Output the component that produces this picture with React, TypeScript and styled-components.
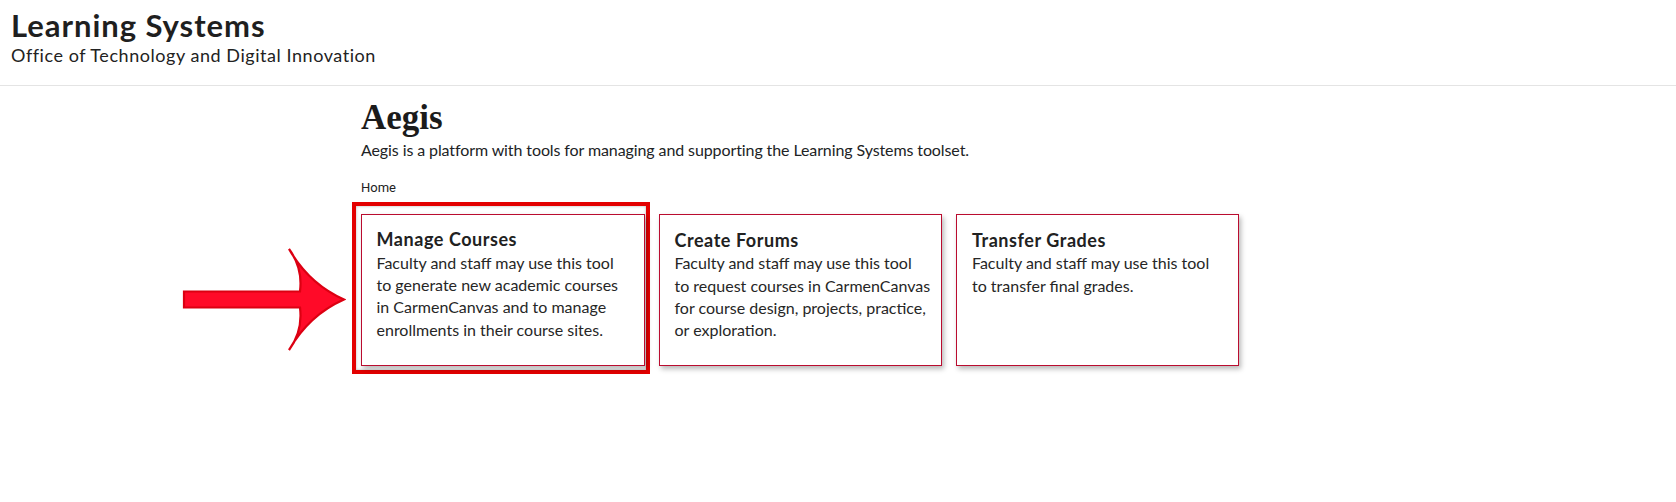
import styled, { createGlobalStyle } from 'styled-components';

type Tool = {
  title: string;
  text: string;
  highlighted?: boolean;
};

const tools: Tool[] = [
  {
    title: 'Manage Courses',
    text: 'Faculty and staff may use this tool to\u00a0generate new academic courses in\u00a0CarmenCanvas and to manage enrollments in their course sites.',
    highlighted: true,
  },
  {
    title: 'Create Forums',
    text: 'Faculty and staff may use this tool to\u00a0request courses in CarmenCanvas for course design, projects, practice, or exploration.',
  },
  {
    title: 'Transfer Grades',
    text: 'Faculty and staff may use this tool to\u00a0transfer final grades.',
  },
];

const GlobalStyle = createGlobalStyle`
  *, *::before, *::after {
    box-sizing: border-box;
  }

  body {
    margin: 0;
    background: #fff;
    color: #212325;
    font-family: Lato, 'Open Sans', sans-serif;
  }

  #root {
    min-height: 100vh;
  }
`;

const Arrow = () => (
  <ArrowSvg width="165" height="108" viewBox="0 0 165 108">
    <path
      d="M3,45.5 H119 Q122,22 108,3 Q128,38 163,53.5 Q128,69 108,104 Q122,85 119,61.5 H3 Z"
      fill="#ff0a28"
      stroke="#dc0012"
      strokeWidth="2.2"
    />
  </ArrowSvg>
);

const ToolCard = ({ title, text }: Tool) => (
  <Card>
    <CardTitle>{title}</CardTitle>
    <CardText>{text}</CardText>
  </Card>
);

const App = () => (
  <>
    <GlobalStyle />
    <Header>
      <SiteTitle>Learning Systems</SiteTitle>
      <SiteSubtitle>Office of Technology and Digital Innovation</SiteSubtitle>
    </Header>
    <Main>
      <PageTitle>Aegis</PageTitle>
      <Lead>
        Aegis is a platform with tools for managing and supporting the Learning Systems toolset.
      </Lead>
      <Breadcrumb>Home</Breadcrumb>
      <CardGrid>
        {tools.map((tool) =>
          tool.highlighted ? (
            <Callout key={tool.title}>
              <Arrow />
              <ToolCard {...tool} />
            </Callout>
          ) : (
            <ToolCard key={tool.title} {...tool} />
          ),
        )}
      </CardGrid>
    </Main>
  </>
);

export default App;

const Header = styled.header`
  padding: 7px 11px 18px;
  border-bottom: 1px solid #e4e4e4;
`;

const SiteTitle = styled.h1`
  margin: 0;
  font-size: 31px;
  line-height: 36px;
  font-weight: 700;
  letter-spacing: 0.95px;
  color: #1f1f1f;
`;

const SiteSubtitle = styled.p`
  margin: 2px 0 0;
  font-size: 18px;
  line-height: 21.6px;
  letter-spacing: 0.55px;
  color: #222;
`;

const Main = styled.main`
  width: 954px;
  margin: 0 auto;
  padding-top: 12px;
`;

const PageTitle = styled.h2`
  margin: 0;
  font-family: 'Liberation Serif', 'DejaVu Serif', serif;
  font-size: 35px;
  line-height: 40px;
  font-weight: 700;
  color: #1b1b1b;
`;

const Lead = styled.p`
  margin: 0;
  font-size: 16px;
  line-height: 24px;
  letter-spacing: -0.1px;
`;

const Breadcrumb = styled.nav`
  margin-top: 16px;
  font-family: Roboto, 'Liberation Sans', sans-serif;
  font-size: 13px;
  line-height: 19.5px;
  color: #222;
`;

const CardGrid = styled.div`
  margin-top: 17px;
  display: grid;
  grid-template-columns: repeat(3, 283px);
  column-gap: 14.5px;
`;

const Callout = styled.div`
  position: relative;
  margin: -12px -6px -8px -9px;
  padding: 7.5px 1.5px 3.5px 4.5px;
  border: 4.5px solid #e30000;
  box-shadow: inset 0 0 3px rgba(0, 0, 0, 0.3);
`;

const ArrowSvg = styled.svg`
  position: absolute;
  left: -175.5px;
  top: 39.5px;
`;

const Card = styled.article`
  height: 100%;
  border: 1px solid #ba0c2f;
  background: #fff;
  padding: 13.5px 8px 23px 15px;
  box-shadow: 2px 3px 5px rgba(0, 0, 0, 0.28);
`;

const CardTitle = styled.h3`
  margin: 0;
  font-size: 18px;
  line-height: 22.5px;
  font-weight: 700;
  letter-spacing: 0.55px;
  color: #212121;
`;

const CardText = styled.p`
  margin: 1px 0 0;
  font-size: 16px;
  line-height: 22.4px;
  color: #262626;
`;
